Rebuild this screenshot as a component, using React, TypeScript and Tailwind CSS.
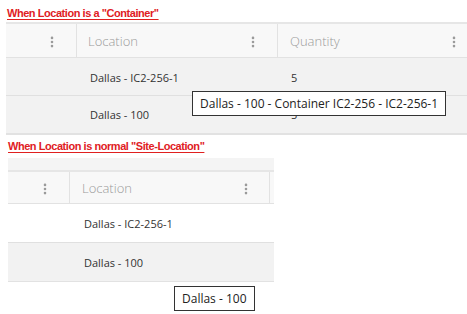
import { EllipsisVertical } from "lucide-react";

const cellFont = { fontFamily: '"Open Sans", "Noto Sans", sans-serif' };

const Dots = () => (
  <EllipsisVertical className="h-[14px] w-[14px] text-[#9a9a9a]" strokeWidth={2.5} />
);

const Title = ({ text }: { text: string }) => (
  <div
    className="text-[11px] font-bold text-[#e0201f] underline underline-offset-2 tracking-[-0.45px] leading-none"
    style={{ fontFamily: '"Liberation Sans", Arial, sans-serif' }}
  >
    {text}
  </div>
);

const Tip = ({ text }: { text: string }) => (
  <div className="absolute border border-[#333] bg-white px-[7px] h-[25px] flex items-center text-[12px] text-[#222] whitespace-nowrap">
    {text}
  </div>
);

export default function App() {
  return (
    <div className="w-[467px] h-[314px] bg-white relative overflow-hidden text-[#333]" style={cellFont}>
      <div className="pl-[7px] pt-[8px]">
        <Title text={'When Location is a "Container"'} />
      </div>

      {/* container table */}
      <div className="ml-[6px] mt-[3px] border-t-2 border-[#e6e6e6]">
        <div className="grid grid-cols-[71px_201px_188px] h-[34px] bg-[#f8f8f8] border-b border-[#e2e2e2]">
          <div className="flex items-center justify-end pr-[17px] pt-[3px] border-r border-[#e2e2e2]">
            <Dots />
          </div>
          <div className="flex items-center justify-between pl-[11px] pr-[17px] pt-[3px] border-r border-[#e2e2e2] text-[13px] text-[#9b9b9b] font-light">
            Location
            <Dots />
          </div>
          <div className="flex items-center justify-between pl-[12px] pr-[5px] pt-[3px] text-[13px] text-[#9b9b9b] font-light">
            Quantity
            <Dots />
          </div>
        </div>
        <div className="grid grid-cols-[71px_201px_188px] h-[38px] pt-[3px] bg-[#f2f2f2] border-b border-[#e0e0e0] text-[11px] items-center">
          <div />
          <div className="pl-[13px]">Dallas - IC2-256-1</div>
          <div className="pl-[13px]">5</div>
        </div>
        <div className="grid grid-cols-[71px_201px_188px] h-[39px] pt-[2px] bg-[#f2f2f2] border-b-2 border-[#e2e2e2] text-[11px] items-center">
          <div />
          <div className="pl-[13px]">Dallas - 100</div>
          <div className="pl-[13px]">5</div>
        </div>
      </div>
      <div className="absolute left-[192px] top-[91px]">
        <Tip text="Dallas - 100 - Container IC2-256 - IC2-256-1" />
      </div>

      <div className="pl-[8px] pt-[6px]">
        <Title text={'When Location is normal "Site-Location"'} />
      </div>

      {/* site-location table */}
      <div className="ml-[8px] mt-[6px] w-[266px]">
        <div className="h-[14px] bg-[#f4f4f4] border-b-2 border-[#e6e6e6]" />
        <div className="grid grid-cols-[62px_200px_4px] h-[32px] bg-[#f8f8f8] border-b border-[#e2e2e2]">
          <div className="flex items-center justify-end pr-[17px] pt-[2px] border-r border-[#e2e2e2]">
            <Dots />
          </div>
          <div className="flex items-center justify-between pl-[12px] pr-[16px] pt-[2px] border-r border-[#e2e2e2] text-[13px] text-[#9b9b9b] font-light">
            Location
            <Dots />
          </div>
          <div />
        </div>
        <div className="grid grid-cols-[62px_204px] h-[39px] pt-[2px] bg-white border-b border-[#e0e0e0] text-[11px] items-center">
          <div />
          <div className="pl-[14px]">Dallas - IC2-256-1</div>
        </div>
        <div className="grid grid-cols-[62px_204px] h-[39px] pt-[2px] bg-[#f2f2f2] border-b border-[#e2e2e2] text-[11px] items-center">
          <div />
          <div className="pl-[14px]">Dallas - 100</div>
        </div>
      </div>
      <div className="absolute left-[174px] top-[286px]">
        <Tip text="Dallas - 100" />
      </div>
    </div>
  );
}
